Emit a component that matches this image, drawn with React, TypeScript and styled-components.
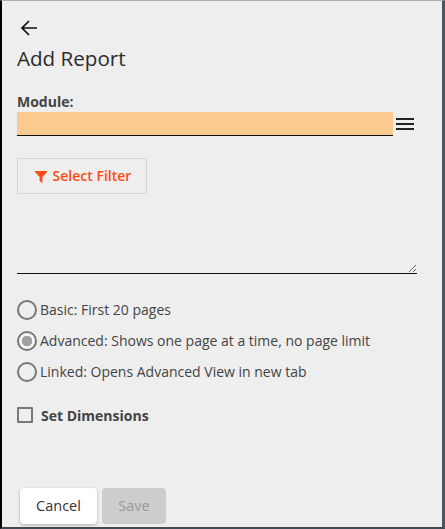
import { createGlobalStyle } from 'styled-components';
import styled from 'styled-components';

const GlobalStyle = createGlobalStyle`
  html, body {
    margin: 0;
    padding: 0;
    background: #eeeeee;
  }

  * {
    box-sizing: border-box;
  }
`;

const MODES = [
  { id: 'basic', label: 'Basic: First 20 pages', checked: false },
  { id: 'advanced', label: 'Advanced: Shows one page at a time, no page limit', checked: true },
  { id: 'linked', label: 'Linked: Opens Advanced View in new tab', checked: false },
];

export default function App() {
  return (
    <Panel>
      <GlobalStyle />
      <BackButton aria-label="Back">
        <svg width="18" height="18" viewBox="0 0 18 18" fill="none" stroke="#111" strokeWidth="1.7">
          <path d="M17 9H2M9 2L2 9l7 7" />
        </svg>
      </BackButton>
      <Title>Add Report</Title>

      <FieldLabel>Module:</FieldLabel>
      <ModuleRow>
        <ModuleInput />
        <MenuIcon aria-label="Menu">
          <span />
          <span />
          <span />
        </MenuIcon>
      </ModuleRow>

      <FilterButton>
        <FilterIcon width="12" height="12" viewBox="0 0 12 12">
          <path d="M0 0h12v1L7.4 6v6L4.6 10V6L0 1z" fill="#fc4c14" />
        </FilterIcon>
        Select Filter
      </FilterButton>

      <Notes />

      <ModeList>
        {MODES.map((mode) => (
          <ModeRow key={mode.id}>
            <Radio type="radio" name="mode" defaultChecked={mode.checked} />
            {mode.label}
          </ModeRow>
        ))}
      </ModeList>

      <DimensionsRow>
        <CheckBox type="checkbox" />
        Set Dimensions
      </DimensionsRow>

      <Footer>
        <CancelButton>Cancel</CancelButton>
        <SaveButton disabled>Save</SaveButton>
      </Footer>
    </Panel>
  );
}

const Panel = styled.div`
  display: flex;
  flex-direction: column;

  width: 445px;
  height: 529px;
  padding: 17px 0 0 15px;
  border-top: 1px solid #b0b0b0;
  border-left: 2px solid #000000;
  border-right: 3px solid #4a5560;
  border-bottom: 2px solid #3f4a55;

  background: #eeeeee;

  font-family: 'Open Sans', sans-serif;
  color: #333333;
`;

const BackButton = styled.button`
  display: flex;
  align-items: center;

  width: 24px;
  height: 20px;
  padding: 0 0 0 3px;
  border: none;

  background: none;
`;

const Title = styled.h1`
  margin: 7px 0 0;

  font-size: 20.6px;
  font-weight: 400;
  line-height: 27px;
  color: #2b2b2b;
`;

const FieldLabel = styled.label`
  margin-top: 20px;

  font-size: 14px;
  font-weight: 700;
  line-height: 20px;
  color: #444444;
`;

const ModuleRow = styled.div`
  display: flex;
  align-items: center;
`;

const ModuleInput = styled.input`
  width: 376px;
  height: 24px;
  padding: 0;
  border: none;
  border-bottom: 1px solid #111111;
  border-radius: 0;
  outline: none;

  background: #fdca90;
`;

const MenuIcon = styled.div`
  display: flex;
  flex-direction: column;
  gap: 3px;

  width: 18px;
  margin-left: 3px;

  span {
    height: 2px;
    background: #222222;
  }
`;

const FilterButton = styled.button`
  display: flex;
  align-items: center;
  justify-content: center;
  gap: 6px;

  width: 130px;
  height: 36px;
  margin-top: 22px;
  padding: 0 0 2px 2px;
  border: 1px solid #d6d6d6;
  border-radius: 3px;

  background: #eeeeee;

  font-family: inherit;
  font-size: 14px;
  font-weight: 600;
  color: #fc4c14;
`;

const FilterIcon = styled.svg`
  margin-top: 4px;
`;

const Notes = styled.textarea`
  display: block;

  width: 400px;
  height: 63px;
  margin-top: 17px;
  padding: 0;
  border: none;
  border-bottom: 1px solid #111111;
  border-radius: 0;
  outline: none;

  background: transparent;
`;

const ModeList = styled.div`
  display: flex;
  flex-direction: column;
  gap: 11px;

  margin-top: 26px;
`;

const ModeRow = styled.label`
  display: flex;
  align-items: center;
  gap: 3px;

  height: 20px;

  font-size: 14px;
  line-height: 20px;
  color: #444444;
`;

const Radio = styled.input`
  appearance: none;
  flex: none;

  width: 20px;
  height: 20px;
  margin: 0;
  border: 2px solid #777777;
  border-radius: 50%;

  background: transparent;

  &:checked {
    background: radial-gradient(circle, #a0a0a0 0 5px, #f6f6f6 5.5px);
  }
`;

const DimensionsRow = styled.label`
  display: flex;
  align-items: center;
  gap: 8px;

  height: 20px;
  margin-top: 23px;

  font-size: 14px;
  font-weight: 700;
  color: #444444;
`;

const CheckBox = styled.input`
  appearance: none;
  flex: none;

  width: 16px;
  height: 16px;
  margin: 0;
  border: 2px solid #777777;
  border-radius: 1px;

  background: transparent;
`;

const Footer = styled.div`
  display: flex;
  gap: 5px;

  margin-top: auto;
  margin-bottom: 3px;
  padding-left: 3px;
`;

const CancelButton = styled.button`
  width: 77px;
  height: 36px;
  padding: 0 0 2px;
  border: none;
  border-radius: 4px;
  box-shadow: 0 1px 3px rgba(0, 0, 0, 0.3);

  background: #ffffff;

  font-family: inherit;
  font-size: 14.5px;
  color: #333333;
`;

const SaveButton = styled.button`
  width: 64px;
  height: 36px;
  padding: 0 0 2px;
  border: none;
  border-radius: 4px;

  background: #cdcdcd;

  font-family: inherit;
  font-size: 14.5px;
  color: #9a9a9a;
`;
